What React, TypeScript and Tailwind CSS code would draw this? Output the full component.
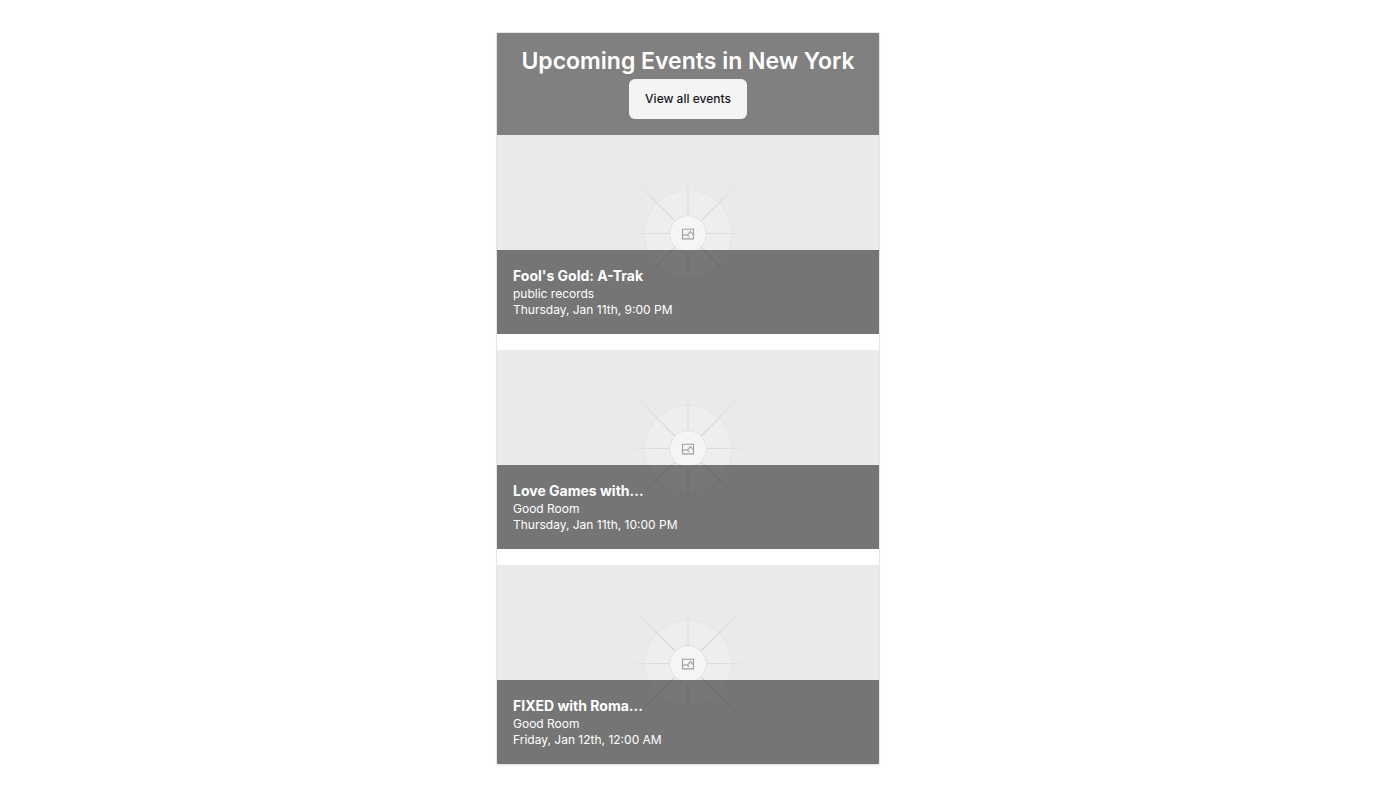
type EventItem = {
  title: string;
  venue: string;
  date: string;
};

const events: EventItem[] = [
  { title: "Fool's Gold: A-Trak", venue: "public records", date: "Thursday, Jan 11th, 9:00 PM" },
  { title: "Love Games with...", venue: "Good Room", date: "Thursday, Jan 11th, 10:00 PM" },
  { title: "FIXED with Roma...", venue: "Good Room", date: "Friday, Jan 12th, 12:00 AM" },
];

function PlaceholderArt({ id }: { id: string }) {
  const gradient = `ray-${id}`;
  return (
    <svg viewBox="0 0 120 120" fill="none" aria-hidden="true" className="size-[120px]">
      <defs>
        <radialGradient id={gradient} gradientUnits="userSpaceOnUse" cx="60" cy="60" r="60">
          <stop offset="0.3" stopColor="#dadada" />
          <stop offset="0.65" stopColor="#dedede" />
          <stop offset="1" stopColor="#eaeaea" />
        </radialGradient>
        <radialGradient id={`${gradient}-long`} gradientUnits="userSpaceOnUse" cx="60" cy="60" r="78">
          <stop offset="0.3" stopColor="#dadada" />
          <stop offset="0.65" stopColor="#dedede" />
          <stop offset="1" stopColor="#eaeaea" />
        </radialGradient>
      </defs>
      <circle cx="60" cy="60" r="43.8" fill="#eeeeee" stroke="#e4e4e4" />
      <g stroke={`url(#${gradient})`}>
        <path d="M60 2v116" strokeWidth="1.2" />
        <path d="M2 59.5h116" />
      </g>
      <g stroke={`url(#${gradient}-long)`} strokeWidth="1.2">
        <path d="M6 6l108 108" />
        <path d="M114 6L6 114" />
      </g>
      <circle cx="60" cy="60" r="18.3" fill="#f5f5f5" stroke="#e2e2e2" />
      <g stroke="#9f9f9f" strokeWidth="1.1">
        <path d="M54.5 55.3h11v9.6h-11z" />
        <path d="M54.5 61.9l2.6-1.4 2.2.9 3-3.8 3.2 3.1" />
        <path d="M59.3 61.4l2.1 1.3" />
      </g>
    </svg>
  );
}

function EventCard({ event, id }: { event: EventItem; id: string }) {
  return (
    <article className="relative flex h-[199px] items-start justify-center overflow-hidden bg-[#eaeaea] pt-[39px]">
      <PlaceholderArt id={id} />
      <div className="absolute inset-x-0 bottom-0 bg-black/50 p-4 text-xs text-white">
        <h2 className="text-sm font-bold">{event.title}</h2>
        <p>{event.venue}</p>
        <p>{event.date}</p>
      </div>
    </article>
  );
}

export default function App() {
  return (
    <main className="flex justify-center py-8 font-[Inter,sans-serif]">
      <section className="w-full max-w-96 overflow-hidden rounded-xs border border-[#e5e5e5] bg-white shadow-xs">
        <header className="flex flex-col items-center gap-1.5 bg-[#808080] p-4">
          <h1 className="text-[23px] leading-6 font-semibold text-white">Upcoming Events in New York</h1>
          <button
            type="button"
            className="h-10 rounded-md bg-[#f4f4f4] px-4 text-xs font-medium text-[#18181b]"
          >
            View all events
          </button>
        </header>
        <div className="flex flex-col gap-4">
          {events.map((event, index) => (
            <EventCard key={event.title} event={event} id={String(index)} />
          ))}
        </div>
      </section>
    </main>
  );
}
